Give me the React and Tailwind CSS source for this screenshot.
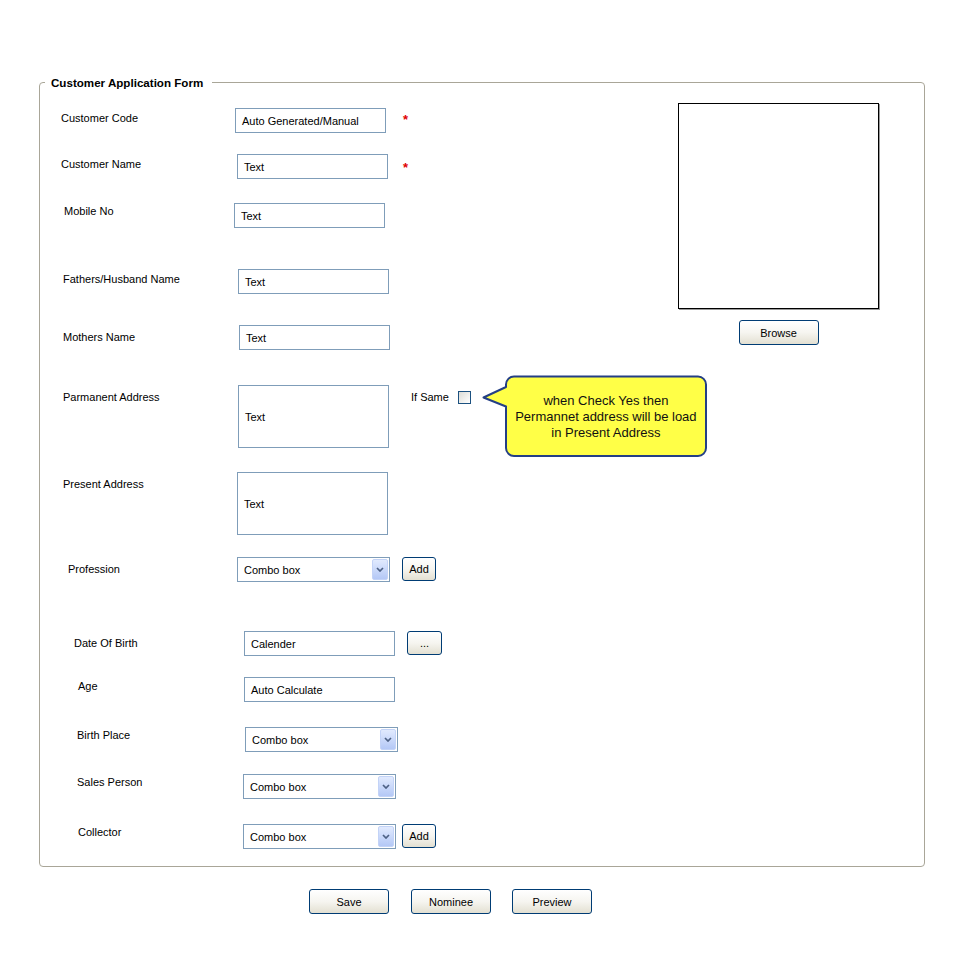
import React from 'react'

function Btn({ className = '', children }) {
  return (
    <div
      className={
        'flex items-center justify-center shrink-0 border border-[#003c74] rounded-[3px] bg-gradient-to-b from-white via-[#f6f5f0] to-[#e3e0d2] text-black text-[11px] pt-[1px] ' +
        className
      }
    >
      {children}
    </div>
  )
}

function TextBox({ className = '', children }) {
  return (
    <div
      className={
        'flex items-center shrink-0 w-[151px] h-[25px] border border-[#7f9db9] bg-white pl-[6px] pt-[2px] text-black ' +
        className
      }
    >
      {children}
    </div>
  )
}

function Combo({ className = '' }) {
  return (
    <div
      className={
        'flex items-center justify-between shrink-0 w-[153px] h-[25px] border border-[#7f9db9] bg-white pl-[6px] pr-[1px] text-black ' +
        className
      }
    >
      <span className="pt-[2px]">Combo box</span>
      <div className="flex items-center justify-center w-[16px] h-[21px] rounded-[2px] border border-[#c3d3f7] bg-gradient-to-b from-[#e1eafe] to-[#b4c8f6]">
        <svg width="8" height="5" viewBox="0 0 8 5">
          <path d="M1 1 L4 4 L7 1" fill="none" stroke="#4d6185" strokeWidth="1.7" />
        </svg>
      </div>
    </div>
  )
}

// one form line: label column + control(s)
function Row({ mt, labelW, labelPl, labelDy, label, children }) {
  return (
    <div className={'flex items-start ' + mt}>
      <div className={'shrink-0 ' + labelW + ' ' + labelPl}>
        <div className={'leading-[13px] text-black ' + labelDy}>{label}</div>
      </div>
      {children}
    </div>
  )
}

function Callout() {
  return (
    <div className="absolute left-[24px] top-[-16px] w-[228px] h-[84px]">
      <svg width="228" height="84" viewBox="0 0 228 84" className="absolute left-0 top-0">
        <path
          d="M32 1.5 H216 A8 8 0 0 1 224 9.5 V73 A8 8 0 0 1 216 81 H32 A8 8 0 0 1 24 73 V31.5 L1.5 22.5 L24 12 V9.5 A8 8 0 0 1 32 1.5 Z"
          fill="#ffff47"
          stroke="#243f85"
          strokeWidth="2"
          strokeLinejoin="round"
        />
      </svg>
      <div className="absolute left-[24px] top-[2px] w-[200px] h-[80px] flex items-center justify-center text-center text-[13px] leading-[16px] text-[#111] font-['Liberation_Sans',Arial,sans-serif]">
        when Check Yes then
        <br />
        Permannet address will be load
        <br />
        in Present Address
      </div>
    </div>
  )
}

export default function App() {
  return (
    <div className="w-[980px] h-[980px] bg-white font-['Liberation_Sans',Arial,sans-serif] text-[11px] text-black pt-[82px]">
      {/* group box */}
      <div className="relative ml-[39px] w-[886px] h-[785px] border border-[#a9a698] rounded-[4px] flex">
        <span className="absolute left-[5px] top-[-7px] bg-white pl-[6px] pr-[9px] font-bold text-[11.6px] leading-[14px]">
          Customer Application Form
        </span>

        {/* left column */}
        <div className="w-[638px] shrink-0 flex flex-col">
          <Row mt="mt-[25px]" labelW="w-[195px]" labelPl="pl-[21px]" labelDy="mt-[4px]" label="Customer Code">
            <TextBox>Auto Generated/Manual</TextBox>
            <span className="ml-[17px] mt-[5px] text-[#e00000] font-bold text-[13px] leading-[13px]">*</span>
          </Row>
          <Row mt="mt-[21px]" labelW="w-[197px]" labelPl="pl-[21px]" labelDy="mt-[4px]" label="Customer Name">
            <TextBox>Text</TextBox>
            <span className="ml-[15px] mt-[7px] text-[#e00000] font-bold text-[13px] leading-[13px]">*</span>
          </Row>
          <Row mt="mt-[24px]" labelW="w-[194px]" labelPl="pl-[24px]" labelDy="mt-[2px]" label="Mobile No">
            <TextBox>Text</TextBox>
          </Row>
          <Row mt="mt-[41px]" labelW="w-[198px]" labelPl="pl-[23px]" labelDy="mt-[4px]" label="Fathers/Husband Name">
            <TextBox>Text</TextBox>
          </Row>
          <Row mt="mt-[31px]" labelW="w-[199px]" labelPl="pl-[23px]" labelDy="mt-[6px]" label="Mothers Name">
            <TextBox>Text</TextBox>
          </Row>
          <Row mt="mt-[35px]" labelW="w-[198px]" labelPl="pl-[23px]" labelDy="mt-[6px]" label="Parmanent Address">
            <TextBox className="h-[63px]">Text</TextBox>
            <span className="ml-[22px] mt-[6px] leading-[13px]">If Same</span>
            <div className="relative ml-[9px] mt-[6px]">
              <div className="w-[13px] h-[13px] border border-[#1c5180] bg-gradient-to-br from-[#dcdcd6] to-white" />
              <Callout />
            </div>
          </Row>
          <Row mt="mt-[24px]" labelW="w-[197px]" labelPl="pl-[23px]" labelDy="mt-[6px]" label="Present Address">
            <TextBox className="h-[63px]">Text</TextBox>
          </Row>
          <Row mt="mt-[22px]" labelW="w-[197px]" labelPl="pl-[28px]" labelDy="mt-[6px]" label="Profession">
            <Combo />
            <Btn className="ml-[12px] w-[34px] h-[24px]">Add</Btn>
          </Row>
          <Row mt="mt-[49px]" labelW="w-[204px]" labelPl="pl-[34px]" labelDy="mt-[6px]" label="Date Of Birth">
            <TextBox>Calender</TextBox>
            <Btn className="ml-[12px] w-[35px] h-[24px]">...</Btn>
          </Row>
          <Row mt="mt-[21px]" labelW="w-[204px]" labelPl="pl-[38px]" labelDy="mt-[3px]" label="Age">
            <TextBox>Auto Calculate</TextBox>
          </Row>
          <Row mt="mt-[25px]" labelW="w-[205px]" labelPl="pl-[37px]" labelDy="mt-[2px]" label="Birth Place">
            <Combo />
          </Row>
          <Row mt="mt-[22px]" labelW="w-[203px]" labelPl="pl-[37px]" labelDy="mt-[2px]" label="Sales Person">
            <Combo />
          </Row>
          <Row mt="mt-[25px]" labelW="w-[203px]" labelPl="pl-[38px]" labelDy="mt-[2px]" label="Collector">
            <Combo />
            <Btn className="ml-[6px] w-[34px] h-[24px]">Add</Btn>
          </Row>
        </div>

        {/* photo column */}
        <div className="flex flex-col items-center w-[201px] pt-[20px]">
          <div className="w-[201px] h-[206px] border border-black bg-white shadow-[1px_1px_0_#9a9a9a]" />
          <Btn className="mt-[11px] w-[80px] h-[25px]">Browse</Btn>
        </div>
      </div>

      {/* bottom actions */}
      <div className="flex pl-[309px] mt-[22px]">
        <Btn className="w-[80px] h-[25px]">Save</Btn>
        <Btn className="ml-[22px] w-[80px] h-[25px]">Nominee</Btn>
        <Btn className="ml-[21px] w-[80px] h-[25px]">Preview</Btn>
      </div>
    </div>
  )
}
